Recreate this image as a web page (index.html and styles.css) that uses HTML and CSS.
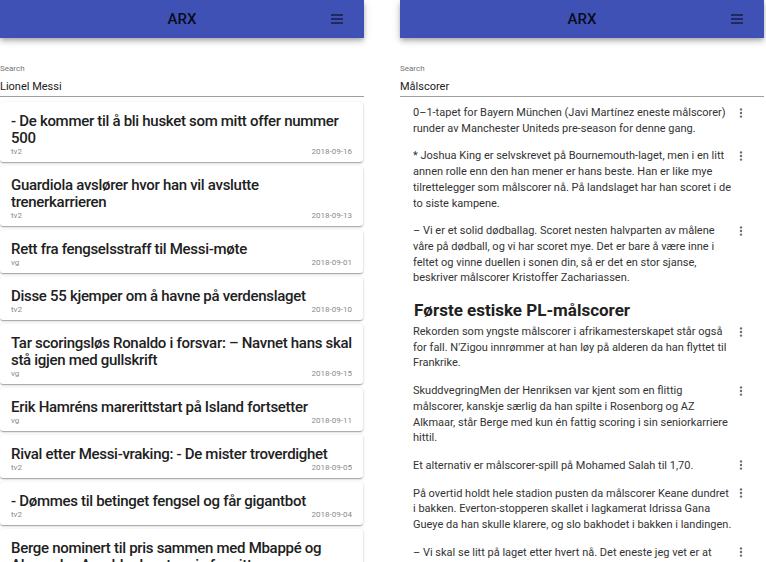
FILE: index.html
```html
<!DOCTYPE html>
<html lang="no">
<head>
<meta charset="utf-8">
<title>ARX</title>
<link rel="stylesheet" href="styles.css">
</head>
<body>
<div class="screens">
  <section class="screen">
    <header class="appbar">
      <span></span>
      <h1 class="appbar-title">ARX</h1>
      <button class="menu-btn" aria-label="Meny">
        <svg width="12" height="10" viewBox="0 0 12 10"><rect x="0" y="0.2" width="12" height="1.6"/><rect x="0" y="4.2" width="12" height="1.6"/><rect x="0" y="8.2" width="12" height="1.6"/></svg>
      </button>
    </header>
    <div class="search">
      <label class="search-label">Search</label>
      <input class="search-input" value="Lionel Messi">
    </div>
    <ul class="cards">
      <li class="card"><h2 class="card-title">- De kommer til å bli husket som mitt offer nummer 500</h2><div class="card-meta"><span>tv2</span><span>2018-09-16</span></div></li>
      <li class="card"><h2 class="card-title">Guardiola avslører hvor han vil avslutte trenerkarrieren</h2><div class="card-meta"><span>tv2</span><span>2018-09-13</span></div></li>
      <li class="card"><h2 class="card-title">Rett fra fengselsstraff til Messi-møte</h2><div class="card-meta"><span>vg</span><span>2018-09-01</span></div></li>
      <li class="card"><h2 class="card-title">Disse 55 kjemper om å havne på verdenslaget</h2><div class="card-meta"><span>tv2</span><span>2018-09-10</span></div></li>
      <li class="card"><h2 class="card-title">Tar scoringsløs Ronaldo i forsvar: – Navnet hans skal stå igjen med gullskrift</h2><div class="card-meta"><span>vg</span><span>2018-09-15</span></div></li>
      <li class="card"><h2 class="card-title">Erik Hamréns marerittstart på Island fortsetter</h2><div class="card-meta"><span>vg</span><span>2018-09-11</span></div></li>
      <li class="card"><h2 class="card-title">Rival etter Messi-vraking: - De mister troverdighet</h2><div class="card-meta"><span>tv2</span><span>2018-09-05</span></div></li>
      <li class="card"><h2 class="card-title">- Dømmes til betinget fengsel og får gigantbot</h2><div class="card-meta"><span>tv2</span><span>2018-09-04</span></div></li>
      <li class="card"><h2 class="card-title">Berge nominert til pris sammen med Mbappé og Alexander-Arnold – kan ta pris for sitt</h2><div class="card-meta"><span>tv2</span><span>2018-09-03</span></div></li>
    </ul>
  </section>

  <section class="screen">
    <header class="appbar">
      <span></span>
      <h1 class="appbar-title">ARX</h1>
      <button class="menu-btn" aria-label="Meny">
        <svg width="12" height="10" viewBox="0 0 12 10"><rect x="0" y="0.2" width="12" height="1.6"/><rect x="0" y="4.2" width="12" height="1.6"/><rect x="0" y="8.2" width="12" height="1.6"/></svg>
      </button>
    </header>
    <div class="search">
      <label class="search-label">Search</label>
      <input class="search-input" value="Målscorer">
    </div>
    <div class="results">
      <p class="result"><button class="kebab" aria-label="Mer"><svg width="4" height="10" viewBox="0 0 4 10"><circle cx="2" cy="1.4" r="1.2"/><circle cx="2" cy="5" r="1.2"/><circle cx="2" cy="8.6" r="1.2"/></svg></button>0–1-tapet for Bayern München (Javi Martínez eneste målscorer) runder av Manchester Uniteds pre-season for denne gang.</p>
      <p class="result"><button class="kebab" aria-label="Mer"><svg width="4" height="10" viewBox="0 0 4 10"><circle cx="2" cy="1.4" r="1.2"/><circle cx="2" cy="5" r="1.2"/><circle cx="2" cy="8.6" r="1.2"/></svg></button>* Joshua King er selvskrevet på Bournemouth-laget, men i en litt annen rolle enn den han mener er hans beste. Han er like mye tilrettelegger som målscorer nå. På landslaget har han scoret i de to siste kampene.</p>
      <p class="result"><button class="kebab" aria-label="Mer"><svg width="4" height="10" viewBox="0 0 4 10"><circle cx="2" cy="1.4" r="1.2"/><circle cx="2" cy="5" r="1.2"/><circle cx="2" cy="8.6" r="1.2"/></svg></button>– Vi er et solid dødballag. Scoret nesten halvparten av målene våre på dødball, og vi har scoret mye. Det er bare å være inne i feltet og vinne duellen i sonen din, så er det en stor sjanse, beskriver målscorer Kristoffer Zachariassen.</p>
      <h2 class="result-heading">Første estiske PL-målscorer</h2>
      <p class="result"><button class="kebab" aria-label="Mer"><svg width="4" height="10" viewBox="0 0 4 10"><circle cx="2" cy="1.4" r="1.2"/><circle cx="2" cy="5" r="1.2"/><circle cx="2" cy="8.6" r="1.2"/></svg></button>Rekorden som yngste målscorer i afrikamesterskapet står også for fall. N'Zigou innrømmer at han løy på alderen da han flyttet til Frankrike.</p>
      <p class="result"><button class="kebab" aria-label="Mer"><svg width="4" height="10" viewBox="0 0 4 10"><circle cx="2" cy="1.4" r="1.2"/><circle cx="2" cy="5" r="1.2"/><circle cx="2" cy="8.6" r="1.2"/></svg></button>SkuddvegringMen der Henriksen var kjent som en flittig målscorer, kanskje særlig da han spilte i Rosenborg og AZ Alkmaar, står Berge med kun én fattig scoring i sin seniorkarriere hittil.</p>
      <p class="result"><button class="kebab" aria-label="Mer"><svg width="4" height="10" viewBox="0 0 4 10"><circle cx="2" cy="1.4" r="1.2"/><circle cx="2" cy="5" r="1.2"/><circle cx="2" cy="8.6" r="1.2"/></svg></button>Et alternativ er målscorer-spill på Mohamed Salah til 1,70.</p>
      <p class="result"><button class="kebab" aria-label="Mer"><svg width="4" height="10" viewBox="0 0 4 10"><circle cx="2" cy="1.4" r="1.2"/><circle cx="2" cy="5" r="1.2"/><circle cx="2" cy="8.6" r="1.2"/></svg></button>På overtid holdt hele stadion pusten da målscorer Keane dundret i bakken. Everton-stopperen skallet i lagkamerat Idrissa Gana Gueye da han skulle klarere, og slo bakhodet i bakken i landingen.</p>
      <p class="result"><button class="kebab" aria-label="Mer"><svg width="4" height="10" viewBox="0 0 4 10"><circle cx="2" cy="1.4" r="1.2"/><circle cx="2" cy="5" r="1.2"/><circle cx="2" cy="8.6" r="1.2"/></svg></button>– Vi skal se litt på laget etter hvert nå. Det eneste jeg vet er at målscorerne våre er i god form foran sesongen.</p>
    </div>
  </section>
</div>
</body>
</html>
```

FILE: styles.css
```css
* { box-sizing: border-box; }

html, body {
  margin: 0;
  padding: 0;
  background: #ffffff;
  height: 562px;
  overflow: hidden;
}

body {
  font-family: Roboto, "Liberation Sans", Arial, sans-serif;
  color: #212121;
}

.screens {
  display: flex;
  gap: 36px;
  align-items: flex-start;
}

.screen {
  width: 364px;
  flex: none;
}

.appbar {
  height: 38px;
  background: #3f51b5;
  display: grid;
  grid-template-columns: 1fr auto 1fr;
  align-items: center;
  box-shadow: 0 2px 4px -1px rgba(0,0,0,0.2), 0 4px 5px 0 rgba(0,0,0,0.14), 0 1px 10px 0 rgba(0,0,0,0.12);
  position: relative;
  z-index: 1;
}

.appbar-title {
  margin: 0;
  font-size: 15px;
  font-weight: 500;
  color: rgba(0,0,0,0.87);
  letter-spacing: 0;
}

.menu-btn {
  justify-self: end;
  margin-right: 21px;
  padding: 0;
  border: 0;
  background: none;
  width: 12px;
  height: 10px;
  display: block;
}

.menu-btn svg {
  display: block;
  fill: rgba(0,0,0,0.6);
}

.search {
  padding-top: 26px;
  display: flex;
  flex-direction: column;
}

.search-label {
  font-size: 8px;
  line-height: 10px;
  color: #757575;
  margin-bottom: 5px;
}

.search-input {
  font-family: inherit;
  font-size: 11px;
  line-height: 14px;
  height: 18px;
  padding: 0 0 3px;
  margin: 0;
  border: 0;
  border-bottom: 1px solid #9e9e9e;
  color: #212121;
  background: transparent;
  outline: none;
  width: 100%;
}

.cards {
  list-style: none;
  margin: 5px 0 0;
  padding: 0;
}

.card {
  background: #fff;
  border-radius: 3px;
  margin: 0 1px 4px 0;
  padding: 11px 11px 5px;
  box-shadow: 0 1px 3px 0 rgba(0,0,0,0.2), 0 1px 1px 0 rgba(0,0,0,0.14), 0 2px 1px -1px rgba(0,0,0,0.12);
}

.card-title {
  margin: 0;
  font-size: 15px;
  line-height: 17px;
  font-weight: 500;
  letter-spacing: -0.3px;
  color: #212121;
}

.card-meta {
  display: flex;
  justify-content: space-between;
  font-size: 8px;
  line-height: 10px;
  color: #8a8a8a;
}

.results {
  padding-top: 2px;
}

.result {
  margin: 0;
  padding: 6px 26px 6px 13px;
  font-size: 11px;
  line-height: 15.7px;
  color: #333;
}

.kebab {
  float: right;
  width: 22px;
  height: 15px;
  margin-right: -14px;
  padding: 0;
  border: 0;
  background: none;
  display: flex;
  align-items: center;
  justify-content: center;
}

.kebab svg {
  display: block;
  fill: #6d6d6d;
}

.result-heading {
  margin: 10px 0 0;
  padding: 0 14px;
  font-size: 17px;
  line-height: 16px;
  font-weight: 700;
  color: #212121;
}
```
